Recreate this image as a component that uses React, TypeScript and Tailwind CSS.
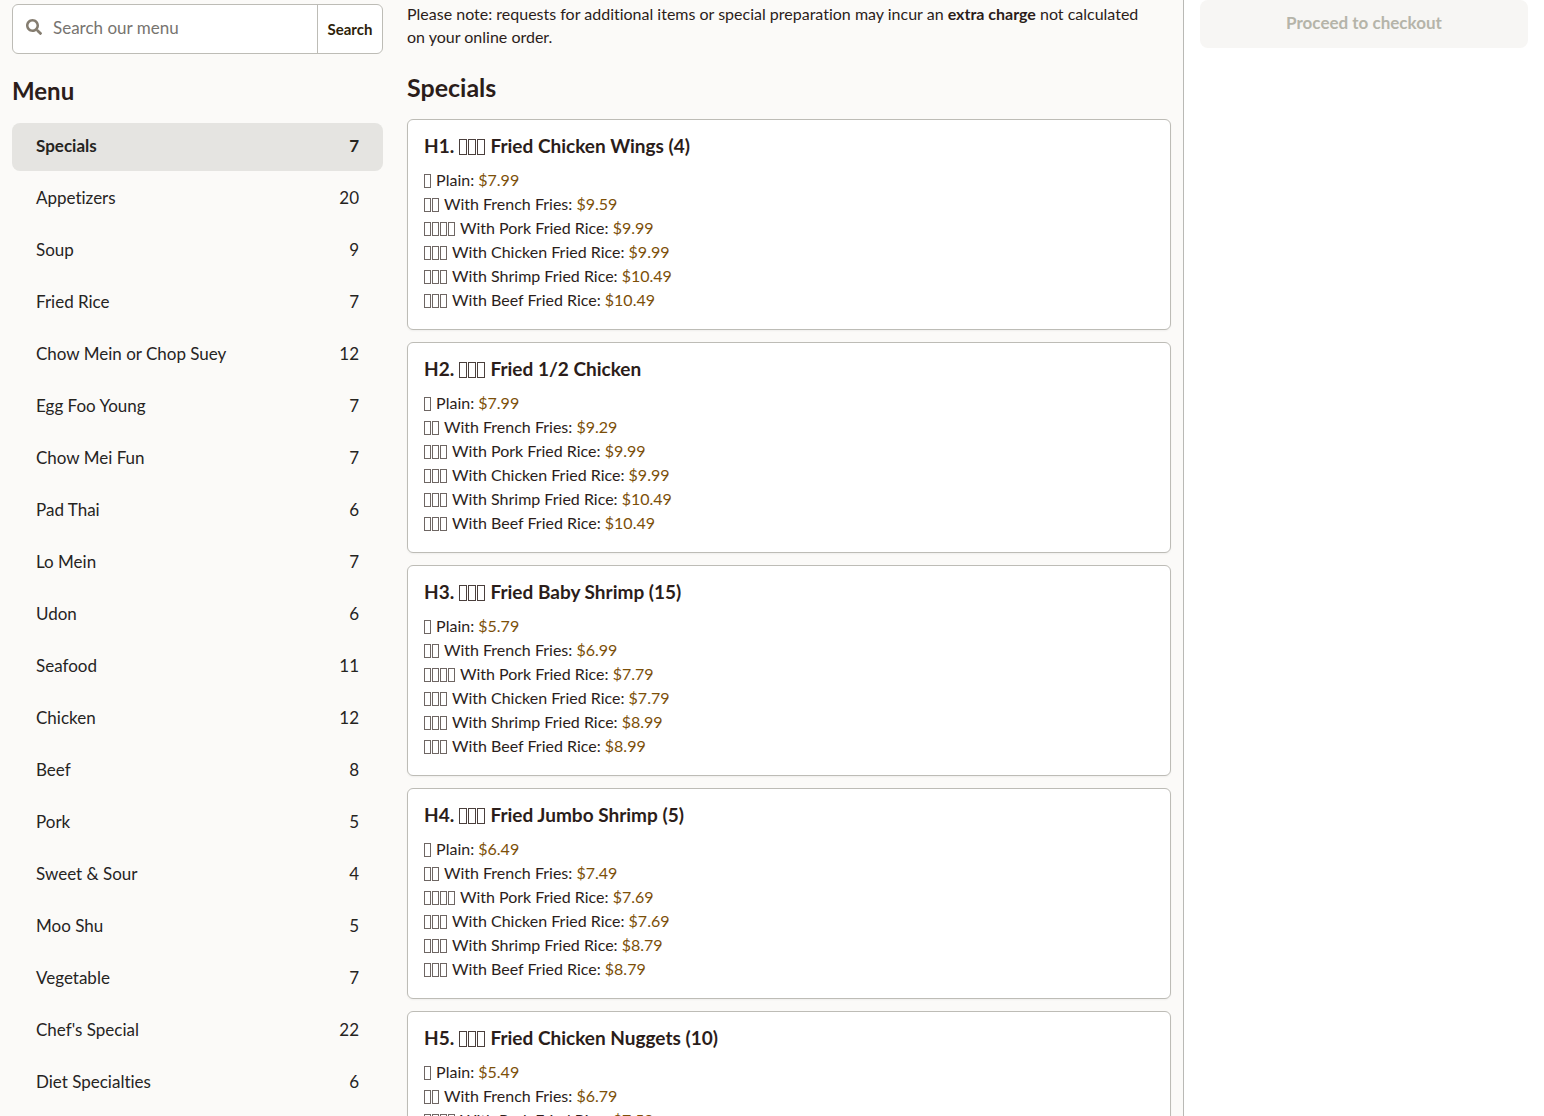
import React from "react";
import { FaSearch } from "react-icons/fa";

const categories: [string, number][] = [
  ["Specials", 7],
  ["Appetizers", 20],
  ["Soup", 9],
  ["Fried Rice", 7],
  ["Chow Mein or Chop Suey", 12],
  ["Egg Foo Young", 7],
  ["Chow Mei Fun", 7],
  ["Pad Thai", 6],
  ["Lo Mein", 7],
  ["Udon", 6],
  ["Seafood", 11],
  ["Chicken", 12],
  ["Beef", 8],
  ["Pork", 5],
  ["Sweet & Sour", 4],
  ["Moo Shu", 5],
  ["Vegetable", 7],
  ["Chef's Special", 22],
  ["Diet Specialties", 6],
];

const sides = [
  "Plain",
  "With French Fries",
  "With Pork Fried Rice",
  "With Chicken Fried Rice",
  "With Shrimp Fried Rice",
  "With Beef Fried Rice",
];

type Dish = { code: string; name: string; prices: string[]; glyphs: number[] };

const dishes: Dish[] = [
  { code: "H1.", name: "Fried Chicken Wings (4)", prices: ["$7.99", "$9.59", "$9.99", "$9.99", "$10.49", "$10.49"], glyphs: [1, 2, 4, 3, 3, 3] },
  { code: "H2.", name: "Fried 1/2 Chicken", prices: ["$7.99", "$9.29", "$9.99", "$9.99", "$10.49", "$10.49"], glyphs: [1, 2, 3, 3, 3, 3] },
  { code: "H3.", name: "Fried Baby Shrimp (15)", prices: ["$5.79", "$6.99", "$7.79", "$7.79", "$8.99", "$8.99"], glyphs: [1, 2, 4, 3, 3, 3] },
  { code: "H4.", name: "Fried Jumbo Shrimp (5)", prices: ["$6.49", "$7.49", "$7.69", "$7.69", "$8.79", "$8.79"], glyphs: [1, 2, 4, 3, 3, 3] },
  { code: "H5.", name: "Fried Chicken Nuggets (10)", prices: ["$5.49", "$6.79", "$7.59"], glyphs: [1, 2, 4] },
];

function Glyphs({ count, large = false }: { count: number; large?: boolean }) {
  return (
    <span aria-hidden="true">
      {Array.from({ length: count }, (_, i) => (
        <span
          key={i}
          className={
            large
              ? "mr-px inline-block h-4 w-2 border border-[#4a3f3c] align-[-2px]"
              : "mr-px inline-block h-3.5 w-[7px] border border-[#6e6663] align-[-2px]"
          }
        />
      ))}
    </span>
  );
}

function DishCard({ dish }: { dish: Dish }) {
  return (
    <article className="mb-3 rounded-md border border-[#bdbcb6] bg-white px-4 pt-3 pb-[17px] shadow-xs">
      <h3 className="text-[19px] leading-7 font-bold">
        {dish.code} <Glyphs count={3} large /> {dish.name}
      </h3>
      <ul className="mt-2 text-base leading-6">
        {dish.prices.map((price, i) => (
          <li key={sides[i]}>
            <Glyphs count={dish.glyphs[i]} /> {sides[i]}: <span className="text-[#7c4f08]">{price}</span>
          </li>
        ))}
      </ul>
    </article>
  );
}

export default function App() {
  return (
    <div className="flex h-screen overflow-hidden bg-white font-['Lato',sans-serif] text-[#2b1d1a] [font-variant-ligatures:none]">
      <div className="flex min-w-0 flex-1 border-r border-[#b9b9b5] bg-[#fbfaf8]">
        <aside className="w-[395px] shrink-0 overflow-y-auto px-3 pt-1 [scrollbar-width:none]">
          <form role="search" className="flex h-[50px] overflow-hidden rounded-md border border-[#bdbcb6] bg-white">
            <label htmlFor="menu-search" className="flex w-10 shrink-0 items-center pb-1 pl-[13px] text-[#857d70]">
              <FaSearch size={16} aria-hidden="true" />
            </label>
            <input
              id="menu-search"
              type="text"
              aria-label="Search our menu"
              placeholder="Search our menu"
              className="min-w-0 flex-1 pb-0.5 text-[17px] outline-none placeholder:text-[#77746f]"
            />
            <button type="button" className="w-[65px] border-l border-[#bdbcb6] text-[15px] font-bold text-[#2e1f0a]">
              Search
            </button>
          </form>
          <h2 className="mt-[22px] mb-[17px] text-2xl leading-[30px] font-bold">Menu</h2>
          <nav aria-label="Menu categories" className="flex flex-col gap-1 text-[17px] text-[#26241f]">
            {categories.map(([name, count], i) => (
              <a
                key={name}
                href="#"
                aria-current={i === 0 ? "true" : undefined}
                className={
                  i === 0
                    ? "flex h-12 shrink-0 items-center justify-between rounded-lg bg-[#e5e4e1] px-6 pb-0.5 font-bold"
                    : "flex h-12 shrink-0 items-center justify-between rounded-lg px-6 pb-0.5"
                }
              >
                <span>{name}</span>
                <span>{count}</span>
              </a>
            ))}
          </nav>
        </aside>
        <main className="min-w-0 flex-1 overflow-y-auto px-3 pt-0.5 [scrollbar-width:none]">
          <p className="pr-3 text-base leading-[23px]">
            Please note: requests for additional items or special preparation may incur an{" "}
            <strong className="font-bold">extra charge</strong> not calculated on your online order.
          </p>
          <h2 className="mt-6 mb-[17px] text-[25px] leading-[30px] font-bold">Specials</h2>
          {dishes.map((dish) => (
            <DishCard key={dish.code} dish={dish} />
          ))}
        </main>
      </div>
      <aside className="w-[360px] shrink-0 px-4">
        <button
          type="button"
          disabled
          className="h-12 w-full rounded-lg bg-[#f7f6f4] pb-0.5 text-[17px] font-bold text-[#b5b4a9]"
        >
          Proceed to checkout
        </button>
      </aside>
    </div>
  );
}
